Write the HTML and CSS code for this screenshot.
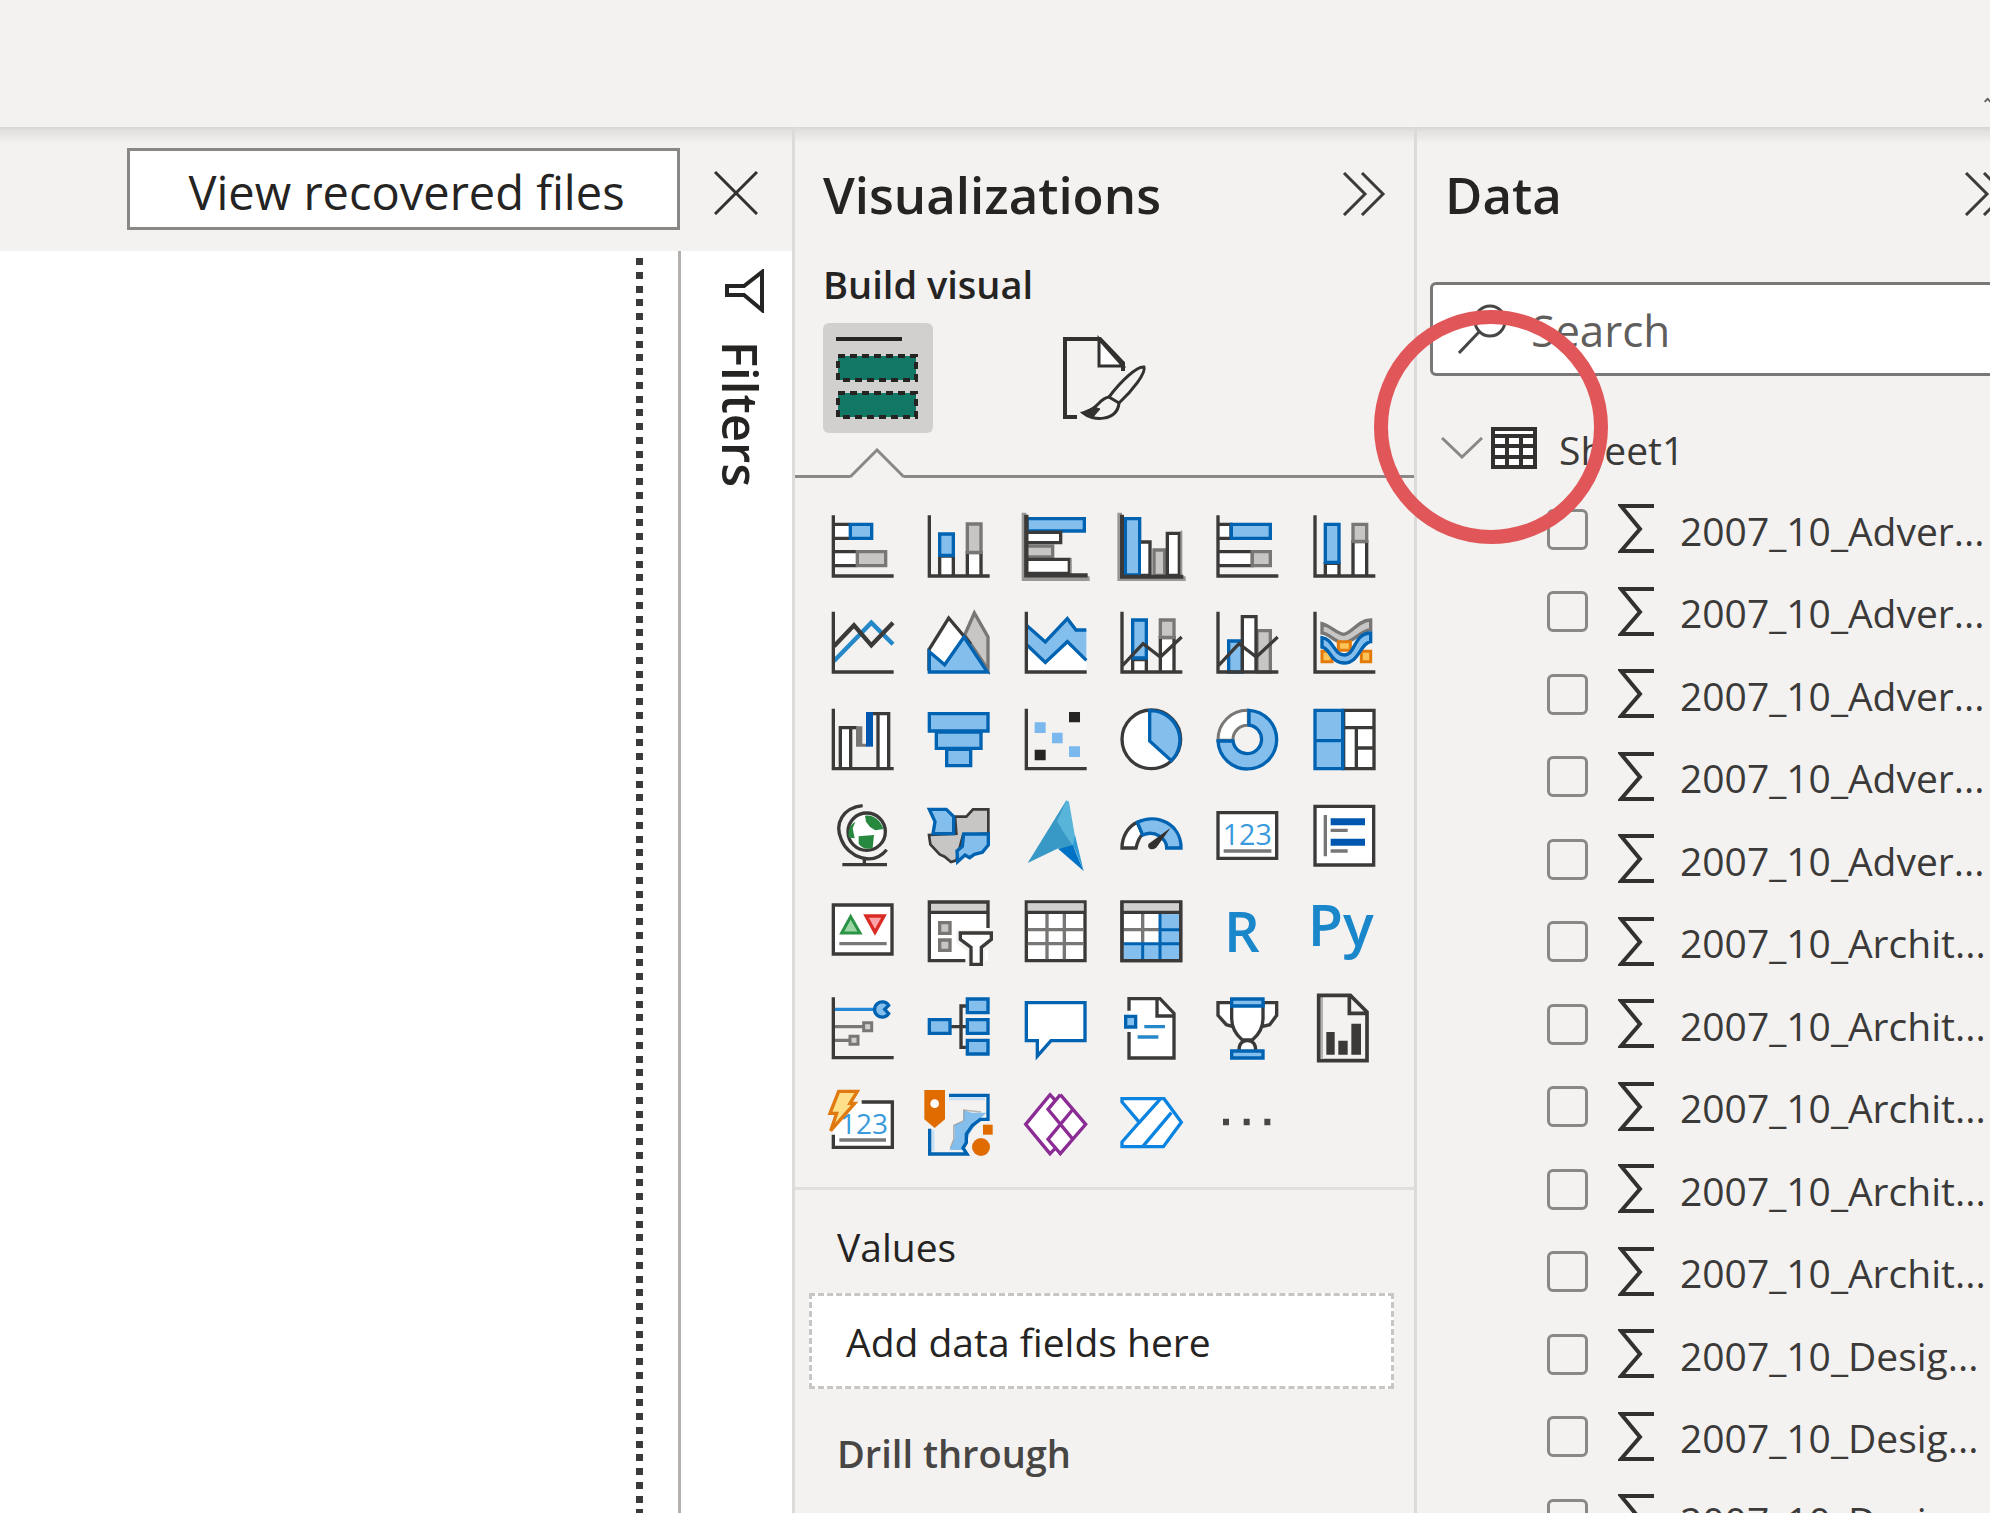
FILE: index.html
```
<!DOCTYPE html>
<html lang="en">
<head>
<meta charset="utf-8">
<title>Report</title>
<link rel="stylesheet" href="styles.css">
</head>
<body>
<header class="ribbon">
  <svg class="ribbon-toggle" viewBox="0 0 10 10" aria-hidden="true"><path d="M1 8L6 3L11 8"/></svg>
</header>
<main class="workspace">
  <section class="report">
    <div class="notice">
      <button class="recover" type="button">View recovered files</button>
      <button class="close" type="button" aria-label="Close"><svg viewBox="0 0 44 44"><path d="M1 1L43 43M43 1L1 43"/></svg></button>
    </div>
    <div class="stage">
      <div class="canvas"><div class="page-edge"></div></div>
      <aside class="filters">
        <svg class="funnel" viewBox="0 0 42 44"><path d="M38 3V41L20 26H3V17H20Z"/></svg>
        <h2 class="filters-title">Filters</h2>
      </aside>
    </div>
  </section>

  <section class="pane viz">
    <div class="pane-head">
      <h2 class="pane-title">Visualizations</h2>
      <button class="collapse" type="button" aria-label="Collapse"><svg viewBox="0 0 44 44"><path d="M2 1L23 22L2 43M20 1L41 22L20 43"/></svg></button>
    </div>
    <h3 class="subtitle">Build visual</h3>
    <div class="tabs">
      <button class="tab selected" type="button" aria-label="Build visual">
        <svg viewBox="0 0 110 110">
          <path d="M13 16H79" stroke="#252423" stroke-width="4" fill="none"/>
          <path d="M15 33H93V57H15ZM15 70H93V94H15Z" fill="#117865" stroke="#252423" stroke-width="4" stroke-dasharray="7 5"/>
        </svg>
      </button>
      <button class="tab" type="button" aria-label="Format visual">
        <svg viewBox="0 0 110 110" fill="none" stroke="#323130" stroke-width="4">
          <path d="M28 94H16V16H51L74 40V48"/>
          <path d="M50 16V43H74Z" fill="#fff" stroke-width="3"/>
          <path d="M95 44C97 50 84 67 70 80L60 74C72 58 88 43 95 44Z" stroke-width="3"/>
          <path d="M60 74C50 75 49 87 34 90C43 98 68 99 70 80" stroke-width="3"/>
          <path d="M34 89L44 94L51 86L45 84Z" fill="#323130" stroke-width="1"/>
        </svg>
      </button>
    </div>
    <div class="notch"><svg viewBox="0 0 54 30"><path d="M0 29L27 2L54 29"/></svg></div>

    <div class="gallery">
      <button type="button" aria-label="Stacked bar chart"><svg viewBox="0 0 289 289"><path class="f" d="M72 73H120V115H72ZM72 155H140V197H72Z"/><path class="k" d="M72 73H118M72 115H118M72 155H140M72 197H140"/><path class="b" d="M121 73H185V115H121Z"/><path class="g" d="M142 155H227V197H142Z"/><path class="k" d="M70 46V228H251"/></svg></button>
      <button type="button" aria-label="Stacked column chart"><svg viewBox="289 0 289 289"><path class="w" d="M390 228V168H431V228M473 228V158H514V228"/><path class="b" d="M390 102H431V166H390Z"/><path class="g" d="M473 72H514V157H473Z"/><path class="k" d="M359 46V228H540"/></svg></button>
      <button type="button" aria-label="Clustered bar chart"><svg viewBox="578 0 289 289"><path d="M641 38V236H838" stroke="#9a9896" stroke-width="14" fill="none"/><path class="b" d="M650 56H822V93H650Z"/><path class="w" d="M650 97H751V128H650"/><path class="g" d="M650 138H727V171H650"/><path class="w" d="M650 178H777V220H650"/><path d="M782 175V222" stroke="#9a9896" stroke-width="5"/><path class="k" d="M648 44V226H832" stroke-width="13"/></svg></button>
      <button type="button" aria-label="Clustered column chart"><svg viewBox="-3 0 289 289"><path d="M59 38V236H257" stroke="#9a9896" stroke-width="14" fill="none"/><path class="b" d="M76 56H119V225H76Z"/><path class="w" d="M123 126H150V226H123"/><path class="g" d="M162 150H194V226H162Z"/><path class="w" d="M202 100H238V226H202Z"/><path d="M244 92V228" stroke="#9a9896" stroke-width="6"/><path class="k" d="M66 44V230H250" stroke-width="12"/></svg></button>
      <button type="button" aria-label="100% stacked bar chart"><svg viewBox="286 0 289 289"><path class="w" d="M355 73H394V115H355M355 155H458V197H355"/><path class="b" d="M395 73H512V115H395Z"/><path class="g" d="M458 155H512V197H458Z"/><path class="k" d="M355 46V228H536"/></svg></button>
      <button type="button" aria-label="100% stacked column chart"><svg viewBox="575 0 289 289"><path class="w" d="M675 228V190H716V228M758 228V125H799V228"/><path class="b" d="M675 73H716V187H675Z"/><path class="g" d="M758 73H799V124H758Z"/><path class="k" d="M644 46V228H825"/></svg></button>

      <button type="button" aria-label="Line chart"><svg viewBox="0 289 289 289"><path d="M72 484L184 369L249 434" fill="none" stroke="#2488c9" stroke-width="13"/><path class="k" d="M72 440L132 377L184 437L249 369" stroke-width="13"/><path class="k" d="M70 336V517H251"/></svg></button>
      <button type="button" aria-label="Area chart"><svg viewBox="289 289 289 289"><path class="g" d="M465 406L494 340L535 412V510Z"/><path class="w" d="M358 450L417 355L480 430L430 508H358Z"/><path class="b" d="M359 456L405 495L463 412L533 517H359Z"/></svg></button>
      <button type="button" aria-label="Stacked area chart"><svg viewBox="578 289 289 289"><path d="M650 436L705 488L771 426L828 482V515H650Z" fill="#fff"/><path d="M650 378L705 427L771 357L797 391H828V482L771 426L705 488L650 436Z" fill="#83beec"/><path d="M650 378L705 427L771 357L797 391H828M650 436L705 488L771 426L828 482" fill="none" stroke="#0063b1" stroke-width="10"/><path class="k" d="M648 336V517H829"/></svg></button>
      <button type="button" aria-label="Line and stacked column chart"><svg viewBox="-3 289 289 289"><path class="w" d="M98 517V480H139V517M181 517V414H222V517"/><path class="b" d="M98 361H139V475H98Z"/><path class="g" d="M181 361H222V413H181Z"/><path class="k" d="M66 336V517H247M68 497L129 432L181 472L245 412"/></svg></button>
      <button type="button" aria-label="Line and clustered column chart"><svg viewBox="286 289 289 289"><path class="b" d="M387 424H428V517H387Z"/><path class="g" d="M472 393H512V517H472Z"/><path class="w" d="M428 517V351H469V517"/><path class="k" d="M355 336V517H536M357 497L418 432L470 472L534 412"/></svg></button>
      <button type="button" aria-label="Ribbon chart"><svg viewBox="575 289 289 289"><path class="g" d="M665 372C690 378 708 402 730 404C756 400 772 362 811 361V390C780 392 760 428 730 430C700 428 690 402 665 400Z"/><path d="M665 455H695V486H665ZM783 455H811V486H783ZM714 426H750V452H714Z" fill="#ffc457" stroke="#e37b0c" stroke-width="9"/><path class="b" d="M665 414C700 418 700 466 732 466C766 466 760 400 811 400V426C780 430 776 490 732 490C690 490 690 446 665 442Z"/><path class="k" d="M644 336V517H825"/></svg></button>

      <button type="button" aria-label="Waterfall chart"><svg viewBox="0 578 289 289"><path class="w" d="M91 805V682H122V805M204 805V640H236V805"/><path d="M122 682H142" class="k"/><path d="M138 678H157V730H170V739H138Z" fill="#797775"/><path d="M168 635H189V739H168Z" fill="#0057b0"/><path class="k" d="M189 640H206M70 625V805H251"/></svg></button>
      <button type="button" aria-label="Funnel chart"><svg viewBox="289 578 289 289"><path class="b" d="M359 640H535V692H359ZM380 695H514V744H380ZM411 747H483V796H411Z"/></svg></button>
      <button type="button" aria-label="Scatter chart"><svg viewBox="578 578 289 289"><path d="M776 635H809V666H776ZM673 748H706V780H673Z" fill="#252423"/><path d="M673 666H706V698H673ZM725 697H757V729H725ZM776 738H809V770H776Z" fill="#7ab8ee"/><path class="k" d="M648 625V805H829"/></svg></button>
      <button type="button" aria-label="Pie chart"><svg viewBox="-3 578 289 289"><circle class="w" cx="154" cy="717" r="88"/><path class="b" d="M149 631A88 88 0 0 1 214 781L149 722Z"/></svg></button>
      <button type="button" aria-label="Donut chart"><svg viewBox="286 578 289 289"><path d="M355 720A88 88 0 0 1 446 630V675A43 43 0 0 0 400 720Z" fill="#fff" stroke="#797775" stroke-width="9"/><path class="b" d="M448 630A88 88 0 1 1 355 722H400A43 43 0 1 0 448 674Z"/></svg></button>
      <button type="button" aria-label="Treemap"><svg viewBox="575 578 289 289"><path class="w" d="M730 630H821V805H730ZM730 682H821M768 682V805M770 743H821"/><path class="b" d="M644 630H727V805H644ZM644 721H727"/></svg></button>

      <button type="button" aria-label="Map"><svg viewBox="0 12 289 289"><circle class="w" cx="170" cy="140" r="56"/><path d="M165 92C190 88 212 105 220 132L196 136L180 126L168 110ZM146 154L192 150L188 188C172 196 156 190 146 176ZM136 110L128 130L134 160L117 158C112 138 120 118 136 110Z" fill="#27893f"/><path class="k" d="M158 62C100 68 72 114 94 164C114 216 188 246 230 194M163 218V236M97 239H231"/></svg></button>
      <button type="button" aria-label="Filled map"><svg viewBox="289 12 289 289"><path d="M436 95H470L490 73H536V146L460 150L440 226L424 231L405 215L390 208L362 178L358 150L440 146Z" fill="#c8c6c4" stroke="#3b3a39" stroke-width="8"/><path class="b" d="M359 73H410L432 95V146H370L376 110Z"/><path class="b" d="M462 147H536V180L518 202L494 208L480 218L466 210L444 230L442 198L458 184Z"/></svg></button>
      <button type="button" aria-label="Azure map"><svg viewBox="578 12 289 289"><path d="M768 46L652 234L744 190Z" fill="#3999c6"/><path d="M768 46L740 110L784 180L800 190L776 50Z" fill="#59b4d9"/><path d="M740 110L790 186L744 192Z" fill="#3999c6"/><path d="M744 192L788 180L798 206L820 258Z" fill="#0072c6"/><path d="M788 180L794 150L820 258Z" fill="#2f9bd6"/></svg></button>
      <button type="button" aria-label="Gauge"><svg viewBox="-3 12 289 289"><path class="w" d="M66 189C66 155 84 124 112 112L128 148C116 158 112 172 108 189Z"/><path class="b" d="M112 112C170 82 244 118 243 189H200C200 160 164 134 128 150Z"/><path d="M212 128L172 184C160 202 138 190 146 176Z" fill="#323130"/></svg></button>
      <button type="button" aria-label="Card"><svg viewBox="286 12 289 289"><path class="w" d="M355 83H531V220H355Z"/><path d="M372 198H515" class="h"/><text class="num" x="369" y="181" font-size="86">123</text></svg></button>
      <button type="button" aria-label="Multi-row card"><svg viewBox="575 12 289 289"><path class="w" d="M644 64H820V240H644Z"/><path class="h" d="M675 90V214M691 136H742M691 198H742"/><path d="M691 110H794M691 172H794" stroke="#0057b0" stroke-width="21"/></svg></button>

      <button type="button" aria-label="KPI"><svg viewBox="0 301 289 289"><path class="w" d="M70 361H246V508H70Z"/><path d="M122 396L150 445H95Z" fill="#9bd6a4" stroke="#2c9446" stroke-width="9"/><path d="M168 394H222L195 443Z" fill="#ffa3a8" stroke="#d92b23" stroke-width="10"/><path class="h" d="M88 477H230"/></svg></button>
      <button type="button" aria-label="Slicer"><svg viewBox="289 301 289 289"><path d="M359 352H535V528H359Z" fill="#fff"/><path d="M359 352H535V380H359Z" fill="#d2d0ce"/><path class="k" d="M535 430V352H359V528H467M359 383H535"/><path class="g" d="M390 414H421V446H390ZM390 466H421V497H390Z"/><path d="M440 436H557V475L526 500V550H474V500L440 475Z" fill="#f3f2f1"/><path class="w" d="M452 445H545V464L515 488V539H484V488L452 464Z"/></svg></button>
      <button type="button" aria-label="Table"><svg viewBox="578 301 289 289"><path class="w" d="M648 352H824V528H648Z"/><path d="M652 356H820V380H652Z" fill="#d2d0ce"/><path class="h" d="M710 384V524M762 384V524M652 435H820M652 477H820"/><path class="k" d="M648 383H824"/></svg></button>
      <button type="button" aria-label="Matrix"><svg viewBox="-3 301 289 289"><path class="w" d="M66 352H242V528H66Z"/><path d="M70 356H238V380H70Z" fill="#d2d0ce"/><path d="M70 477H180V384H238V524H70Z" fill="#83beec"/><path class="h" d="M128 384V477M70 435H180"/><path d="M70 477H238M180 384V524M128 477V524M180 435H238" stroke="#0063b1" stroke-width="9" fill="none"/><path class="k" d="M66 383H242M66 348V528H242V348"/></svg></button>
      <button type="button" aria-label="R script visual"><svg viewBox="286 301 289 289"><text class="lang" x="373" y="501" font-size="168">R</text></svg></button>
      <button type="button" aria-label="Python visual"><svg viewBox="575 301 289 289"><text class="lang" x="622" y="484" font-size="172">Py</text></svg></button>

      <button type="button" aria-label="Key influencers"><svg viewBox="0 590 289 289"><path d="M74 672H190" stroke="#2488d8" stroke-width="10"/><path d="M236 660A23 23 0 1 0 236 685L224 672Z" class="b"/><path class="h" d="M74 724H160M74 765H118"/><path d="M161 712H185V736H161ZM120 753H144V777H120Z" fill="#d2d0ce" stroke="#797775" stroke-width="9"/><path class="k" d="M70 636V817H251"/></svg></button>
      <button type="button" aria-label="Decomposition tree"><svg viewBox="289 590 289 289"><path class="k" d="M470 662H454V786H470M424 724H470"/><path class="b" d="M473 641H535V682H473ZM473 703H535V744H473ZM473 765H535V806H473ZM359 703H421V744H359Z"/></svg></button>
      <button type="button" aria-label="Q&amp;A"><svg viewBox="578 590 289 289"><path d="M648 652H824V766H722L681 812V766H648Z" fill="#fff" stroke="#0063b1" stroke-width="10"/></svg></button>
      <button type="button" aria-label="Narrative"><svg viewBox="-3 590 289 289"><path d="M87 640H175L222 690V818H87Z" fill="#fff"/><path class="k" d="M87 676V640H180L222 684V818H87V740M171 640V692H222"/><path class="b" d="M77 693H107V725H77Z"/><path d="M133 724H195M113 755H175" stroke="#2488c9" stroke-width="10"/></svg></button>
      <button type="button" aria-label="Goals"><svg viewBox="286 590 289 289"><path class="w" d="M396 652H355V690L380 718L400 724M490 652H531V690L510 718L486 724"/><path class="w" d="M396 652H490V700C490 730 472 752 458 764H428C414 752 396 730 396 700Z"/><path class="w" d="M418 796C418 780 424 766 443 766C462 766 468 780 468 796"/><path class="b" d="M396 641H490V662H396ZM396 797H490V818H396Z"/></svg></button>
      <button type="button" aria-label="Paginated report"><svg viewBox="575 590 289 289"><path d="M655 630H748L800 684V826H655Z" fill="#f3f2f1"/><path d="M664 635V818" stroke="#b3b0ad" stroke-width="8"/><path class="k" d="M655 630H750L800 680V826H655ZM747 632V684H800" stroke-width="11"/><path d="M678 740H703V808H678ZM714 766H742V808H714ZM753 715H782V808H753Z" fill="#3b3a39"/></svg></button>

      <button type="button" aria-label="Card (new)"><svg viewBox="-30 -6 289 289"><path d="M110 66H217V202H40V150Z" fill="#fff"/><path class="k" d="M125 66H217V202H40V164"/><path class="h" d="M58 180H198"/><text class="num" x="60" y="163" font-size="84">123</text><path d="M56 34H112L90 70H104L32 152L50 100H30Z" fill="#ffe08a" stroke="#e07a10" stroke-width="10"/></svg></button>
      <button type="button" aria-label="ArcGIS map"><svg viewBox="259 -6 289 289"><path d="M390 46H505V118H480L440 178L438 222H330V148" fill="#f3f2f1"/><path d="M388 56H496M340 150V214" stroke="#c7e0f4" stroke-width="9" fill="none"/><path d="M500 98H456L432 90V124L404 134V176L390 210H434L450 160L480 118Z" fill="#83beec"/><path d="M388 46H505V118H482L458 136L440 162V188L430 204L442 222H330V146" fill="none" stroke="#0063b1" stroke-width="10"/><path d="M392 204L402 178V136L432 122V90L484 96" stroke="#8a8886" stroke-width="4" fill="none" opacity=".6"/><path d="M314 30H376V118L345 144L314 118Z" fill="#e06c00"/><circle cx="345" cy="71" r="13" fill="#fff"/><circle cx="484" cy="201" r="27" fill="#e06c00"/><path d="M490 134H519V164H490Z" fill="#e06c00"/></svg></button>
      <button type="button" aria-label="Power Apps"><svg viewBox="-22 -6 289 289"><path d="M46 133L119 44L150 44L226 133L150 222H119Z" fill="#fff"/><path d="M134 60L119 44L46 133L119 221L134 206M150 44L113 88L186 176M150 44L226 133L150 221L113 178L186 90" fill="none" stroke="#8b2c94" stroke-width="10"/></svg></button>
      <button type="button" aria-label="Power Automate"><svg viewBox="267 -6 289 289"><path d="M336 56H462L514 127L460 200H336V186L388 127L336 66Z" fill="#fff" stroke="#0a84e0" stroke-width="10"/><path d="M388 127L450 58M398 200L484 98" fill="none" stroke="#0a84e0" stroke-width="10"/></svg></button>
      <button type="button" aria-label="Get more visuals"><svg viewBox="286 1164 289 289"><path d="M370 1286H388V1306H370ZM432 1286H450V1306H432ZM494 1286H512V1306H494Z" fill="#494745"/></svg></button>
    </div>

    <div class="wells">
      <h3 class="well-label">Values</h3>
      <div class="drop">Add data fields here</div>
      <h3 class="well-label strong">Drill through</h3>
    </div>
  </section>

  <section class="pane data">
    <div class="pane-head">
      <h2 class="pane-title">Data</h2>
      <button class="collapse" type="button" aria-label="Collapse"><svg viewBox="0 0 44 44"><path d="M2 1L23 22L2 43M20 1L41 22L20 43"/></svg></button>
    </div>
    <label class="search">
      <svg viewBox="0 0 50 50"><circle cx="32" cy="17" r="15"/><path d="M21 28L1 49"/></svg>
      <input type="search" placeholder="Search" aria-label="Search">
    </label>
    <div class="sheet">
      <svg class="twisty" viewBox="0 0 42 22"><path d="M1 1L21 20L41 1"/></svg>
      <svg class="grid-icon" viewBox="0 0 46 42"><path d="M2 2H44V40H2Z" fill="#fff"/><path d="M2 2H44V40H2ZM2 9H44M2 19H44M2 30H44M16 9V40M30 9V40"/></svg>
      <span>Sheet1</span>
    </div>
    <ul class="fields">
      <li><label><input type="checkbox"><svg viewBox="0 0 36 50"><path d="M36 2H3L22 25L3 47H36"/></svg><span>2007_10_Adver...</span></label></li>
      <li><label><input type="checkbox"><svg viewBox="0 0 36 50"><path d="M36 2H3L22 25L3 47H36"/></svg><span>2007_10_Adver...</span></label></li>
      <li><label><input type="checkbox"><svg viewBox="0 0 36 50"><path d="M36 2H3L22 25L3 47H36"/></svg><span>2007_10_Adver...</span></label></li>
      <li><label><input type="checkbox"><svg viewBox="0 0 36 50"><path d="M36 2H3L22 25L3 47H36"/></svg><span>2007_10_Adver...</span></label></li>
      <li><label><input type="checkbox"><svg viewBox="0 0 36 50"><path d="M36 2H3L22 25L3 47H36"/></svg><span>2007_10_Adver...</span></label></li>
      <li><label><input type="checkbox"><svg viewBox="0 0 36 50"><path d="M36 2H3L22 25L3 47H36"/></svg><span>2007_10_Archit...</span></label></li>
      <li><label><input type="checkbox"><svg viewBox="0 0 36 50"><path d="M36 2H3L22 25L3 47H36"/></svg><span>2007_10_Archit...</span></label></li>
      <li><label><input type="checkbox"><svg viewBox="0 0 36 50"><path d="M36 2H3L22 25L3 47H36"/></svg><span>2007_10_Archit...</span></label></li>
      <li><label><input type="checkbox"><svg viewBox="0 0 36 50"><path d="M36 2H3L22 25L3 47H36"/></svg><span>2007_10_Archit...</span></label></li>
      <li><label><input type="checkbox"><svg viewBox="0 0 36 50"><path d="M36 2H3L22 25L3 47H36"/></svg><span>2007_10_Archit...</span></label></li>
      <li><label><input type="checkbox"><svg viewBox="0 0 36 50"><path d="M36 2H3L22 25L3 47H36"/></svg><span>2007_10_Desig...</span></label></li>
      <li><label><input type="checkbox"><svg viewBox="0 0 36 50"><path d="M36 2H3L22 25L3 47H36"/></svg><span>2007_10_Desig...</span></label></li>
      <li><label><input type="checkbox"><svg viewBox="0 0 36 50"><path d="M36 2H3L22 25L3 47H36"/></svg><span>2007_10_Desig...</span></label></li>
    </ul>
    <div class="callout"></div>
  </section>
</main>
</body>
</html>
```
FILE: styles.css
```
* { box-sizing: border-box; }

body {
  margin: 0;
  height: 100vh;
  display: flex;
  flex-direction: column;
  overflow: hidden;
  background: #f3f2f1;
  color: #252423;
  font: 400 39px/40px "Open Sans", "Noto Sans", sans-serif;
}

h2, h3, ul { margin: 0; padding: 0; font-weight: 400; font-size: inherit; }
ul { list-style: none; }

button {
  padding: 0;
  border: 0;
  background: none;
  color: inherit;
  font: inherit;
}

svg { display: block; }

/* Ribbon */
.ribbon {
  flex: 0 0 127px;
  display: flex;
  justify-content: flex-end;
  align-items: flex-end;
  padding-bottom: 24px;
}
.ribbon-toggle { width: 6px; height: 6px; fill: none; stroke: #605e5c; stroke-width: 3; }

.workspace {
  position: relative;
  flex: 1;
  min-height: 0;
  display: flex;
  margin-right: -46px;
}
.workspace::before {
  content: "";
  position: absolute;
  inset: 0 0 auto;
  height: 16px;
  background: linear-gradient(#d9d7d5, #e3e1df 4px, #f3f2f100);
}

/* Report area */
.report { flex: 1; min-width: 0; display: flex; flex-direction: column; }
.notice {
  height: 124px;
  display: flex;
  justify-content: flex-end;
  align-items: flex-start;
  gap: 34px;
  padding: 21px 34px 0 0;
}
.recover {
  width: 553px;
  height: 82px;
  padding: 6px 0 0 6px;
  border: 3px solid #8a8886;
  background: #fff;
  font-size: 47px;
}
.close { display: flex; align-items: center; height: 90px; }
.close svg { width: 44px; height: 44px; fill: none; stroke: #323130; stroke-width: 3; }

.stage { flex: 1; display: flex; background: #fff; }
.canvas {
  flex: 1;
  display: flex;
  justify-content: flex-end;
  padding: 7px 35px 0 0;
  border-right: 3px solid #b3b0ad;
}
.page-edge {
  width: 7px;
  background: linear-gradient(#3b3a39 7px, #fff 7px 14px, #3b3a39 14px 21px, #fff 21px 28px, #3b3a39 28px 35px, #fff 35px 41px, #3b3a39 41px 48px, #fff 48px) 0 0 / 7px 55px;
}
.filters {
  width: 111px;
  display: flex;
  flex-direction: column;
  align-items: center;
  gap: 28px;
  padding: 18px 0 0 8px;
}
.funnel { width: 42px; height: 44px; margin-left: 8px; fill: none; stroke: #252423; stroke-width: 4; }
.filters-title { writing-mode: vertical-rl; font-size: 49px; line-height: 60px; font-weight: 600; }

/* Side panes */
.pane {
  position: relative;
  flex: 0 0 622px;
  min-width: 0;
  border-left: 3px solid #dddbd9;
}
.pane-head {
  display: flex;
  justify-content: space-between;
  align-items: center;
  padding: 37px 28px 0;
}
.pane-title { font-size: 51px; line-height: 60px; font-weight: 600; }
.collapse svg { width: 44px; height: 44px; fill: none; stroke: #3b3a39; stroke-width: 3; }

.subtitle { padding: 40px 28px 19px; font-size: 38px; font-weight: 600; }
.tabs { display: flex; gap: 116px; padding-left: 28px; }
.tab { width: 110px; height: 110px; border-radius: 6px; }
.tab.selected { background: #d2d0ce; }
.tab svg { width: 100%; }

.notch { display: flex; align-items: flex-end; padding-top: 15px; }
.notch svg { width: 54px; height: 30px; fill: none; stroke: #8a8886; stroke-width: 3; }
.notch::before, .notch::after { content: ""; height: 3px; background: #8a8886; }
.notch::before { width: 55px; }
.notch::after { flex: 1; }

/* Visual types */
.gallery {
  display: grid;
  grid-template-columns: repeat(6, 1fr);
  width: 578px;
  margin: 22px 0 13px 15px;
}
.gallery button { aspect-ratio: 1; }
.gallery svg { width: 100%; fill: none; stroke-width: 10; }
.k { fill: none; stroke: #3b3a39; }
.w { fill: #fff; stroke: #3b3a39; }
.f { fill: #fff; }
.b { fill: #83beec; stroke: #0063b1; }
.g { fill: #c8c6c4; stroke: #797775; }
.h { fill: none; stroke: #797775; }
.num { fill: #3a9bdc; }
.lang { fill: #1b87cb; font-weight: 600; }

.wells { padding: 37px 20px 0 14px; border-top: 3px solid #e1dfdd; }
.well-label { padding-left: 28px; }
.well-label.strong { font-size: 38px; font-weight: 600; color: #484644; }
.drop {
  margin: 26px 0 44px;
  padding: 26px 34px 24px;
  border: 3px dashed #c8c6c4;
  background: #fff;
}

/* Data pane */
.search {
  display: flex;
  align-items: center;
  height: 94px;
  margin: 58px 16px 0 13px;
  padding-left: 25px;
  gap: 23px;
  border: 3px solid #7a7876;
  border-radius: 6px;
  background: #fff;
}
.search svg { width: 50px; height: 50px; fill: none; stroke: #484644; stroke-width: 3; }
.search input {
  flex: 1;
  min-width: 0;
  padding: 2px 0 0;
  border: 0;
  outline: 0;
  background: none;
  font: inherit;
  font-size: 44px;
  line-height: 60px;
}
.search input::placeholder { color: #605e5c; opacity: 1; }

.sheet { display: flex; align-items: center; height: 60px; margin-top: 42px; padding-left: 24px; }
.twisty { width: 42px; height: 22px; fill: none; stroke: #8a8886; stroke-width: 3; }
.grid-icon { width: 46px; height: 42px; margin: 0 22px 0 8px; fill: none; stroke: #323130; stroke-width: 4; }
.sheet span, .fields span { padding-top: 3px; color: #3b3a39; }

.fields { display: grid; grid-auto-rows: 82px 83px; margin-top: 10px; padding-left: 130px; }
.fields li { display: flex; align-items: center; }
.fields label { display: flex; align-items: center; }
.fields input {
  appearance: none;
  width: 41px;
  height: 41px;
  margin: 0;
  border: 3px solid #8a8886;
  border-radius: 6px;
}
.fields svg { width: 36px; height: 50px; margin: 0 26px 0 30px; fill: none; stroke: #323130; stroke-width: 4; }

/* Highlight ring */
.callout {
  position: absolute;
  top: 183px;
  left: -43px;
  width: 234px;
  height: 234px;
  border: 14px solid #e15759;
  border-radius: 50%;
}
```
